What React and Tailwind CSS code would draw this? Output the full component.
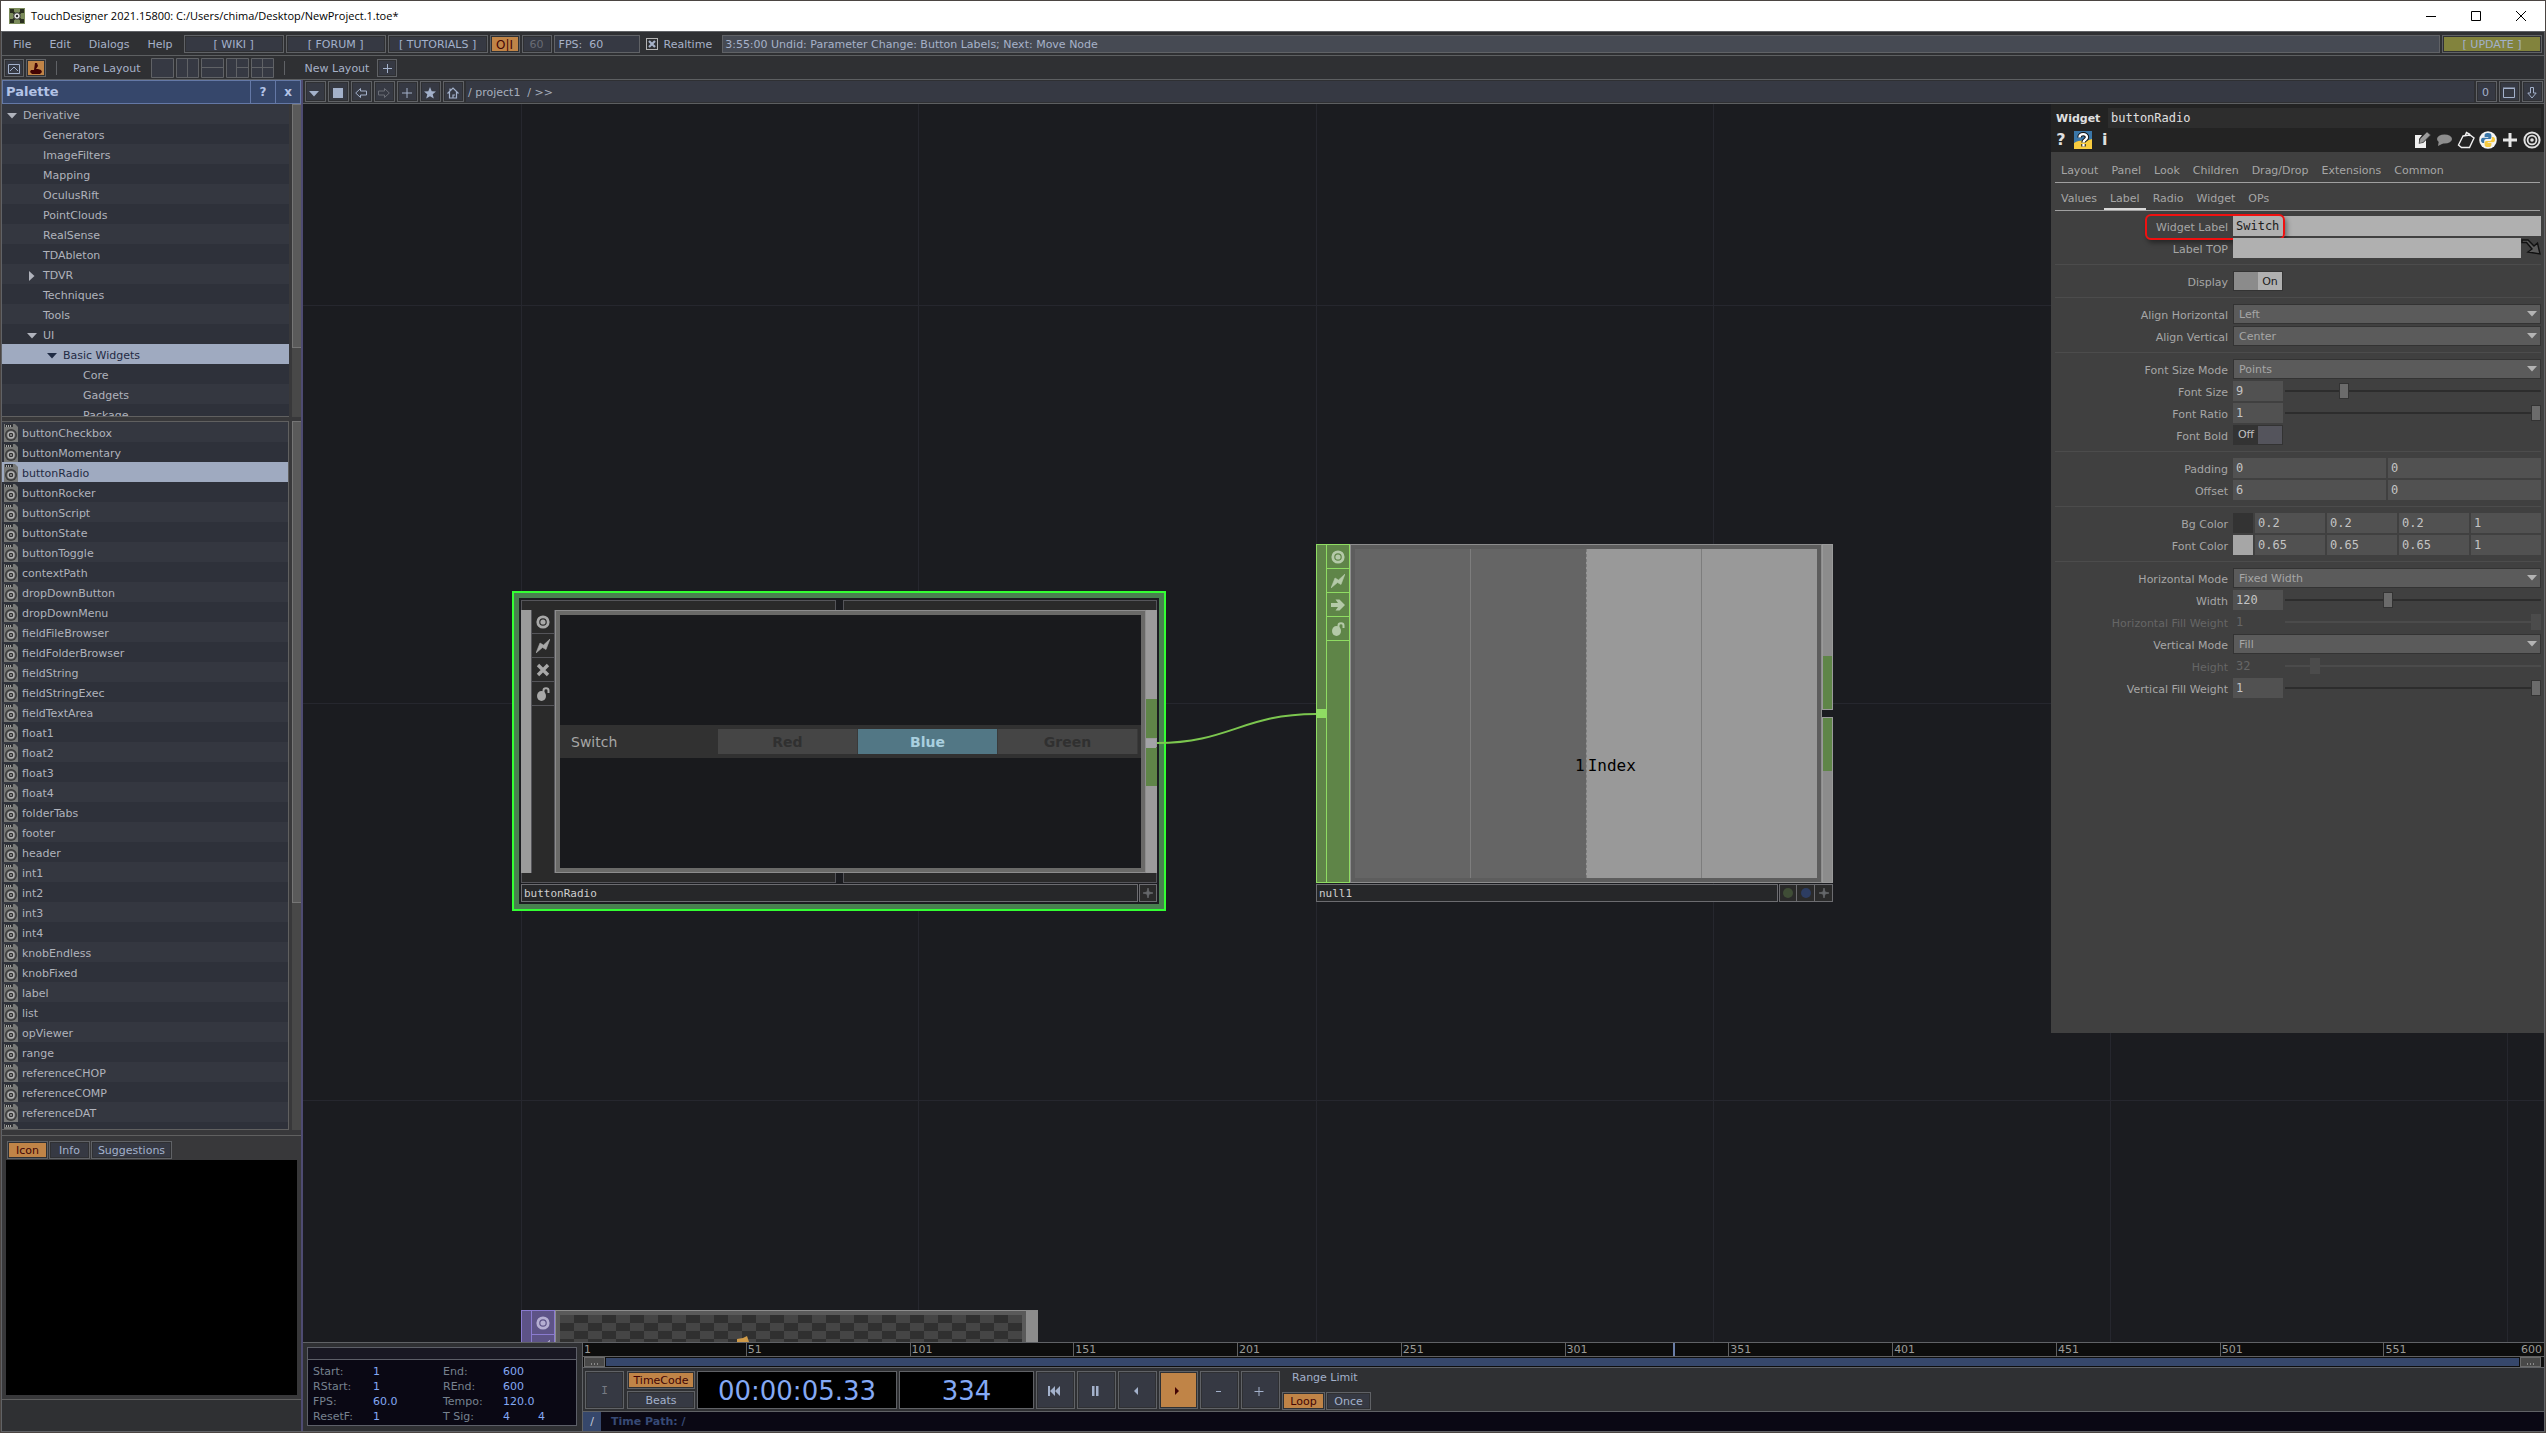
import { useState } from 'react'
import clsx from 'clsx'

const TREE = [
  { label: 'Derivative', depth: 0, arrow: 'down' },
  { label: 'Generators', depth: 1 },
  { label: 'ImageFilters', depth: 1 },
  { label: 'Mapping', depth: 1 },
  { label: 'OculusRift', depth: 1 },
  { label: 'PointClouds', depth: 1 },
  { label: 'RealSense', depth: 1 },
  { label: 'TDAbleton', depth: 1 },
  { label: 'TDVR', depth: 1, arrow: 'right' },
  { label: 'Techniques', depth: 1 },
  { label: 'Tools', depth: 1 },
  { label: 'UI', depth: 1, arrow: 'down' },
  { label: 'Basic Widgets', depth: 2, arrow: 'down' },
  { label: 'Core', depth: 3 },
  { label: 'Gadgets', depth: 3 },
  { label: 'Package', depth: 3 },
]

const TREE_INDENT = ['pl-[21px]', 'pl-[41px]', 'pl-[61px]', 'pl-[81px]']

const WIDGETS = [
  'buttonCheckbox', 'buttonMomentary', 'buttonRadio', 'buttonRocker', 'buttonScript', 'buttonState',
  'buttonToggle', 'contextPath', 'dropDownButton', 'dropDownMenu', 'fieldFileBrowser', 'fieldFolderBrowser',
  'fieldString', 'fieldStringExec', 'fieldTextArea', 'float1', 'float2', 'float3', 'float4', 'folderTabs',
  'footer', 'header', 'int1', 'int2', 'int3', 'int4', 'knobEndless', 'knobFixed', 'label', 'list', 'opViewer',
  'range', 'referenceCHOP', 'referenceCOMP', 'referenceDAT', 'referenceMAT',
]

const TICKS = [1, 51, 101, 151, 201, 251, 301, 351, 401, 451, 501, 551]
const LAST_FRAME = 600
const FRAME = 334

const ORANGE = 'bg-[#c08447] text-[#430404]'

/* ---------- shared bits ---------- */

function BoxButton({ className, on = false, children, ...rest }) {
  return (
    <button
      className={clsx(
        'flex shrink-0 items-center justify-center border border-[#606266] pt-0.5 outline-1 -outline-offset-2 outline-[#2f3033]',
        on ? ORANGE : 'bg-[#363943] text-[#a3b1cb]',
        className
      )}
      {...rest}
    >
      {children}
    </button>
  )
}

function Triangle({ dir = 'down', className }) {
  return (
    <svg viewBox="0 0 10 6" className={clsx('w-2.5 h-1.5', dir === 'right' && '-rotate-90', className)}>
      <path d="M0 0h10L5 5.5z" fill="currentColor" />
    </svg>
  )
}

function CompIcon() {
  return (
    <svg viewBox="0 0 14 18" className="-mt-0.5 w-3.5 h-[18px] shrink-0">
      <path d="M0 0h11l3 3v15H0z" fill="#777876" />
      <path d="M1 0h8v3H1z" fill="#303236" />
      <path d="M2 1h1v2H2zM4 1h1v2H4zM6 1h1v2H6z" fill="#aaa" />
      <circle cx="7" cy="11" r="6" fill="#3c3c3c" />
      <circle cx="7" cy="11" r="4.600" fill="#606060" />
      <circle cx="7" cy="11" r="3" fill="#303030" stroke="#b4b4b4" strokeWidth="1.4" />
      <circle cx="7" cy="11" r="1" fill="#999" />
    </svg>
  )
}

function Target({ className }) {
  return (
    <svg viewBox="0 0 18 18" className={className} fill="none" stroke="currentColor">
      <circle cx="9" cy="9" r="7.6" strokeWidth="2" />
      <circle cx="9" cy="9" r="4.4" strokeWidth="1.8" />
      <circle cx="9" cy="9" r="1.8" fill="currentColor" stroke="none" />
    </svg>
  )
}

function Python({ className }) {
  return (
    <svg viewBox="0 0 18 18" className={className}>
      <circle cx="9" cy="9" r="8.8" fill="#f4f4f4" />
      <path d="M9 2C6 2 5.6 3.2 5.6 4.6V6h3.7v.7H4C2.600 6.700 2 8 2 9.300s.7 2.600 1.900 2.600h1.300V10c0-1.200 1-2 2-2h3.500c1 0 1.700-.8 1.700-1.800V4.600C12.400 2.800 11.400 2 9 2z" fill="#3a76a8" />
      <path d="M9 16c3 0 3.400-1.200 3.400-2.600V12H8.700v-.7H14c1.400 0 2-1.300 2-2.600s-.7-2.600-1.900-2.600h-1.300V8c0 1.200-1 2-2 2H7.300c-1 0-1.700.8-1.700 1.800v1.600C5.600 15.200 6.600 16 9 16z" fill="#f7cb3f" />
    </svg>
  )
}

/* ---------- window top ---------- */

function TitleBar() {
  return (
    <header className="flex h-[30px] shrink-0 items-center bg-white pr-0.5 pl-2 text-black">
      <svg viewBox="0 0 16 16" className="size-4">
        <path d="M0 0h16v16H0z" fill="#7c8c5c" />
        <path d="M1 1h4v4H1zM11 1h4v4h-4zM1 11h4v4H1zM11 11h4v4h-4z" fill="#2b3020" />
        <path d="M3 3l10 10M13 3L3 13" stroke="#2b3020" strokeWidth="2" />
        <circle cx="8" cy="8" r="3.300" fill="#e8e8e8" stroke="#333" />
        <circle cx="8" cy="8" r="1.200" fill="#222" />
      </svg>
      <h1 className="ml-1.5 flex-1 font-['Open_Sans',sans-serif] text-[11px]">
        TouchDesigner 2021.15800: C:/Users/chima/Desktop/NewProject.1.toe*
      </h1>
      <button aria-label="Minimize" className="flex h-full w-[45px] items-center justify-center">
        <svg viewBox="0 0 10 10" className="size-2.5"><path d="M0 5.500h10" stroke="#000" /></svg>
      </button>
      <button aria-label="Maximize" className="flex h-full w-[45px] items-center justify-center">
        <svg viewBox="0 0 10 10" className="size-2.5"><path d="M.5.500h9v9h-9z" stroke="#000" fill="none" /></svg>
      </button>
      <button aria-label="Close" className="flex h-full w-[45px] items-center justify-center">
        <svg viewBox="0 0 10 10" className="size-2.5"><path d="M0 0l10 10M10 0L0 10" stroke="#000" /></svg>
      </button>
    </header>
  )
}

function MenuBar() {
  return (
    <nav className="flex h-6 shrink-0 items-center gap-0.5 border-b border-[#5d5f61] pr-0.5 pl-0.5 text-[#a7b2c9]">
      <div className="flex pt-0.5">
        {['File', 'Edit', 'Dialogs', 'Help'].map(m => (
          <button key={m} className="px-[9px]">{m}</button>
        ))}
      </div>
      {['[ WIKI ]', '[ FORUM ]', '[ TUTORIALS ]'].map(m => (
        <BoxButton key={m} className="h-[18px] w-[100px]">{m}</BoxButton>
      ))}
      <BoxButton on className="h-[18px] w-[30px] text-xs">O|I</BoxButton>
      <BoxButton className="h-[18px] w-[30px]"><span className="text-[#686b74]">60</span></BoxButton>
      <div className="flex h-[18px] w-[86px] items-center border border-[#606266] bg-[#363943] pt-0.5 pl-1 whitespace-pre">
        FPS:  60
      </div>
      <label className="ml-1 flex items-center gap-1.5">
        <span className="grid size-3 place-items-center border border-[#b5b5b5]">
          <input type="checkbox" defaultChecked className="peer col-start-1 row-start-1 size-2.5 appearance-none" />
          <svg viewBox="0 0 8 8" className="pointer-events-none invisible col-start-1 row-start-1 size-2 peer-checked:visible">
            <path d="M1 1l6 6M7 1L1 7" stroke="#a7b2c9" strokeWidth="2.200" />
          </svg>
        </span>
        <span className="pt-0.5">Realtime</span>
      </label>
      <output className="ml-2 flex h-[18px] flex-1 items-center border border-[#606266] bg-[#464a53] pt-0.5 pl-0.5">
        3:55:00 Undid: Parameter Change: Button Labels; Next: Move Node
      </output>
      <button className="h-[18px] w-[100px] border border-[#606266] bg-[#82833d] pt-0.5 leading-[14px] text-[#a3b1cb] outline-1 -outline-offset-2 outline-[#2f3033]">
        [ UPDATE ]
      </button>
    </nav>
  )
}

const PANE_LAYOUTS = [
  { name: 'Single', d: '' },
  { name: 'Left and right', d: 'M11.5 0v19' },
  { name: 'Top and bottom', d: 'M0 9.500h23' },
  { name: 'Split right', d: 'M10.500 0v19M10.500 9.500h12' },
  { name: 'Quad', d: 'M11.5 0v19M0 9.500h23' },
]

function ToolBar() {
  return (
    <div className="flex h-6 shrink-0 items-center gap-0.5 border-b border-[#5d5f61] pl-0.5 text-[#a7b2c9]">
      <BoxButton aria-label="Network" className="h-[18px] w-5">
        <svg viewBox="0 0 12 10" className="h-2.5 w-3" fill="none" stroke="currentColor">
          <path d="M.5.500h11v9H.5zM2 7l4-4 4 4" />
        </svg>
      </BoxButton>
      <BoxButton on aria-label="Palette" className="h-[18px] w-5">
        <svg viewBox="0 0 12 12" className="size-3" fill="currentColor">
          <path d="M5 0h2l1 3-2 3h2l3 1 1 2-2 2H2L0 9l1-2h3z" />
        </svg>
      </BoxButton>
      <span className="ml-2 h-3.5 w-px bg-[#606266]" />
      <span className="mr-2 ml-3.5 pt-0.5">Pane Layout</span>
      {PANE_LAYOUTS.map(p => (
        <button key={p.name} aria-label={p.name} className="h-5">
          <svg viewBox="0 0 23 20" className="h-5 w-[23px]" fill="#363943" stroke="#606266">
            <path d={`M.5.500h22v19H.5z${p.d}`} />
          </svg>
        </button>
      ))}
      <span className="ml-2 h-3.5 w-px bg-[#606266]" />
      <span className="mr-1.5 ml-[18px] pt-0.5">New Layout</span>
      <BoxButton aria-label="Add layout" className="h-[18px] w-5">
        <svg viewBox="0 0 9 9" className="size-[9px]"><path d="M4.500 0v9M0 4.500h9" stroke="currentColor" /></svg>
      </BoxButton>
    </div>
  )
}

/* ---------- palette ---------- */

function rowColor(i, selected) {
  if (selected) return 'bg-[#9faac0] text-[#1f2b44]'
  return i % 2 ? 'bg-[#2e313a] text-[#b0b3bc]' : 'bg-[#343740] text-[#b0b3bc]'
}

function ScrollBar({ thumb }) {
  return (
    <div className="w-[9px] shrink-0 bg-[#484848]">
      <div className="border border-r-0 border-[#757575] bg-[#5a5a5a]" style={{ height: `${thumb}%` }} />
    </div>
  )
}

function Palette() {
  const [folder, setFolder] = useState('Basic Widgets')
  const [item, setItem] = useState('buttonRadio')
  const [tab, setTab] = useState('Icon')

  return (
    <aside className="flex w-[299px] shrink-0 flex-col bg-[#38383a]">
      <div className="flex h-6 shrink-0 border border-[#6478a6] bg-[#36476b] text-[#b3c3e6]">
        <h2 className="flex-1 self-center pl-[3px] text-[13px] font-bold">Palette</h2>
        <button className="w-[25px] border-l border-[#6478a6] text-xs font-bold">?</button>
        <button className="w-[25px] border-l border-[#6478a6] text-xs font-bold">x</button>
      </div>

      <div className="flex h-[313px] shrink-0 justify-between">
        <ul className="w-[287px] overflow-hidden border-b border-[#606060]">
          {TREE.map((t, i) => (
            <li key={t.label}>
              <button
                onClick={() => setFolder(t.label)}
                className={clsx('flex h-5 w-full items-center pt-[3px]', TREE_INDENT[t.depth], rowColor(i, folder === t.label))}
              >
                {t.arrow && <Triangle dir={t.arrow} className="mr-1.5 -ml-4" />}
                {t.label}
              </button>
            </li>
          ))}
        </ul>
        <ScrollBar thumb={78} />
      </div>

      <div className="mt-1 flex min-h-0 flex-1 justify-between">
        <ul className="w-[287px] overflow-hidden border-y border-r border-[#606060]">
          {WIDGETS.map((w, i) => (
            <li key={w}>
              <button
                onClick={() => setItem(w)}
                className={clsx('flex h-5 w-full items-center gap-1 pt-[3px] pl-0.5', rowColor(i, item === w))}
              >
                <CompIcon />
                {w}
              </button>
            </li>
          ))}
        </ul>
        <ScrollBar thumb={68} />
      </div>

      <div className="mt-[5px] flex h-[296px] shrink-0 flex-col border-t border-[#606060] pt-[5px]">
        <div className="flex gap-px pl-[5px]">
          {['Icon', 'Info', 'Suggestions'].map(t => (
            <BoxButton
              key={t}
              on={tab === t}
              onClick={() => setTab(t)}
              className={clsx('h-[18px]', t === 'Suggestions' ? 'w-[81px]' : 'w-[41px]')}
            >
              {t}
            </BoxButton>
          ))}
        </div>
        <div className="mx-1 mt-px flex-1 bg-black" />
        <div className="mt-1 h-8 border-t border-[#606060] bg-[#2f3033]" />
      </div>
    </aside>
  )
}

/* ---------- network pane ---------- */

function PaneBar() {
  const icons = [
    ['Pane type', <Triangle className="mt-0.5 mr-0.5" />],
    ['Stop', <span className="size-2.5 bg-current" />],
    ['Back', <svg viewBox="0 0 12 12" className="size-3" fill="none" stroke="currentColor"><path d="M.7 6L5.500 1.500v2.500h6v4h-6v2.500z" /></svg>],
    ['Forward', <svg viewBox="0 0 12 12" className="size-3" fill="none" stroke="#6b6e76"><path d="M11.300 6L6.500 1.500v2.500h-6v4h6v2.500z" /></svg>],
    ['Add', <svg viewBox="0 0 10 10" className="size-2.5" stroke="currentColor"><path d="M5 0v10M0 5h10" /></svg>],
    ['Bookmark', <svg viewBox="0 0 12 12" className="size-3" fill="currentColor"><path d="M6 0l1.700 4.200 4.300.2-3.300 2.800 1.100 4.300L6 9.200l-3.800 2.300 1.100-4.300L0 4.400l4.300-.2z" /></svg>],
    ['Home', <svg viewBox="0 0 12 12" className="size-3" fill="none" stroke="currentColor" strokeWidth="1.200"><path d="M.5 6.500L6 1l5.500 5.500M2.500 5v6h7V5M6 11V8h2M3 4V1.500" /></svg>],
  ]
  return (
    <div className="flex h-6 shrink-0 items-center gap-0.5 border-b border-[#5d5f61] bg-[#2f3033] pr-px pl-0.5 text-[#a3b1cb]">
      {icons.map(([name, icon]) => (
        <BoxButton key={name} aria-label={name} className="size-[21px] pr-0.5">{icon}</BoxButton>
      ))}
      <div className="flex h-[21px] flex-1 items-center bg-[#363943] pt-0.5 pl-0.5 whitespace-pre text-[#a7aebd]">
        {'/ project1  / >>'}
      </div>
      <BoxButton className="size-[21px] pr-0.5">0</BoxButton>
      <BoxButton aria-label="Maximize pane" className="size-[21px] pr-0.5">
        <svg viewBox="0 0 12 11" className="h-[11px] w-3" fill="none" stroke="currentColor"><path d="M.5 1.500h11v9H.5zM0 1h12" /></svg>
      </BoxButton>
      <BoxButton aria-label="Pull down" className="size-[21px] pr-0.5">
        <svg viewBox="0 0 10 12" className="h-3 w-2.5" fill="none" stroke="currentColor"><path d="M3.500.500h3V6h2.700L5 11 .8 6h2.700z" /></svg>
      </BoxButton>
    </div>
  )
}

const FLAG_ICONS = {
  viewer: (
    <g fill="none" stroke="currentColor">
      <circle cx="7" cy="7" r="5.200" strokeWidth="2.800" />
      <circle cx="7" cy="7" r="2.600" fill="currentColor" stroke="none" />
    </g>
  ),
  bolt: <path d="M0 14L4 4l3.500 2L14 0 10 10.500l-3.500-2z" fill="currentColor" stroke="currentColor" strokeWidth=".6" />,
  cross: <path d="M2 2l10 10M12 2L2 12" stroke="currentColor" strokeWidth="3.400" />,
  arrow: <path d="M0 5h7L4.500 1.500h4L14 7l-5.500 5.500h-4L7 9H0z" fill="currentColor" />,
  lock: (
    <g>
      <ellipse cx="5.500" cy="9" rx="4.500" ry="5" fill="currentColor" />
      <path d="M7.500 6V3.500c0-3 5-3 5 0V6" fill="none" stroke="currentColor" strokeWidth="2" />
    </g>
  ),
}

function Flags({ icons, className, cell }) {
  return (
    <div className={clsx('flex w-6 shrink-0 flex-col border-x', className)}>
      {icons.map(name => (
        <button key={name} aria-label={name} className={clsx('flex h-6 shrink-0 items-center justify-center border-b', cell)}>
          <svg viewBox="0 0 14 14" className="size-3.5">{FLAG_ICONS[name]}</svg>
        </button>
      ))}
    </div>
  )
}

function NodePlus() {
  return (
    <svg viewBox="0 0 10 10" className="size-2.5">
      <path d="M5 0l1 4 4 1-4 1-1 4-1-4-4-1 4-1z" fill="#66686b" stroke="#66686b" strokeWidth=".8" />
    </svg>
  )
}

function NodeName({ children }) {
  return (
    <div className="flex flex-1 items-center border border-[#6c6c70] bg-[#262729] pt-0.5 pl-0.5 font-['DejaVu_Sans_Mono',monospace] text-[#cfcfcf]">
      {children}
    </div>
  )
}

function Bars({ side }) {
  const edge = side === 'top' ? 'border-t' : 'border-b'
  return (
    <div className="flex h-2.5 shrink-0 gap-[7px]">
      <div className={clsx('flex-1 border-x border-[#55555a] bg-[#2a2a2a]', edge)} />
      <div className={clsx('flex-1 border-x border-[#55555a] bg-[#2a2a2a]', edge)} />
    </div>
  )
}

function ButtonRadioNode() {
  const [choice, setChoice] = useState('Blue')
  return (
    <section className="absolute top-[487px] left-[209px] flex h-80 w-[654px] border-2 border-[#33ff33] bg-[#498050] p-[5px]">
      <div className="flex flex-1 flex-col bg-[#1b1c20] p-0.5">
        <Bars side="top" />
        <div className="flex min-h-0 flex-1">
          <div className="w-2.5 shrink-0 bg-[#9b9b9b]" />
          <Flags
            icons={['viewer', 'bolt', 'cross', 'lock']}
            className="border-[#55555a] bg-[#2a2a2a] text-[#a8a8a8]"
            cell="border-[#55555a]"
          />
          <div className="flex flex-1 flex-col justify-center border-5 border-[#6a6a68] bg-[#191a1d] outline-1 -outline-offset-1 outline-[#8d8d8d]">
            <div className="flex h-[33px] items-center bg-[#313131] pr-[3px] text-sm">
              <span className="flex-1 pl-[11px] text-[#a6a6a6]">Switch</span>
              {['Red', 'Blue', 'Green'].map(c => (
                <button
                  key={c}
                  onClick={() => setChoice(c)}
                  className={clsx(
                    'h-[25px] w-[140px] border-r border-[#3a3a3a] font-bold',
                    choice === c ? 'bg-[#527785] text-[#a9cfdf]' : 'bg-[#454545] text-[#303030]'
                  )}
                >
                  {c}
                </button>
              ))}
            </div>
          </div>
          <div className="flex w-[11px] shrink-0 flex-col justify-center gap-[9px] bg-[#9b9b9b] pt-0.5">
            <div className="h-[39px] bg-[#5f8548]" />
            <div className="h-[39px] bg-[#5f8548]" />
          </div>
        </div>
        <Bars side="bottom" />
        <div className="mt-px flex h-[18px] shrink-0 gap-px">
          <NodeName>buttonRadio</NodeName>
          <button aria-label="Activate viewer" className="flex w-[18px] items-center justify-center border border-[#6c6c70] bg-[#2a2a2a]">
            <NodePlus />
          </button>
        </div>
      </div>
    </section>
  )
}

function NullNode() {
  return (
    <section className="absolute top-[440px] left-[1013px] flex w-[517px] flex-col">
      <div className="flex h-[339px]">
        <div className="flex w-2.5 shrink-0 items-center border border-r-0 border-[#8fdc63] bg-[#5f8548]">
          <span className="h-[9px] w-full bg-[#8fdc63]" />
        </div>
        <Flags
          icons={['viewer', 'bolt', 'arrow', 'lock']}
          className="border-y border-[#8fdc63] bg-[#5f8548] text-[#b4c9a8]"
          cell="border-[#8fdc63]"
        />
        <div className="relative flex flex-1 border-5 border-[#5d5d5d] outline-1 -outline-offset-1 outline-[#8d8d8d]">
          <div className="flex-1 border-r border-[#7d7d7d] bg-[#656565]" />
          <div className="flex-1 bg-[#656565]" />
          <div className="flex-1 border-r border-l border-dashed border-[#7d7d7d] bg-[#999] [border-right-style:solid]" />
          <div className="flex-1 bg-[#999]" />
          <p className="absolute bottom-25 left-[220px] flex gap-[3px] font-['DejaVu_Sans_Mono',monospace] text-base text-black">
            <span>1</span>
            <span>Index</span>
          </p>
        </div>
        <div className="flex w-[11px] shrink-0 flex-col gap-[7px]">
          <div className="flex flex-1 flex-col justify-end border border-[#9a9a9a] bg-[#8c8c8c]">
            <div className="h-[53px] bg-[#5f8548]" />
          </div>
          <div className="flex-1 border border-[#9a9a9a] bg-[#8c8c8c]">
            <div className="h-[53px] bg-[#5f8548]" />
          </div>
        </div>
      </div>
      <div className="mt-px flex h-[18px]">
        <NodeName>null1</NodeName>
        <button aria-label="Display flag" className="ml-px flex w-[18px] items-center justify-center border border-[#6c6c70] bg-[#2a2a2a]">
          <span className="size-2.5 rounded-full bg-[#3f4d36]" />
        </button>
        <button aria-label="Render flag" className="flex w-[18px] items-center justify-center border border-l-0 border-[#6c6c70] bg-[#2a2a2a]">
          <span className="size-2.5 rounded-full bg-[#2d3d62]" />
        </button>
        <button aria-label="Activate viewer" className="flex w-[18px] items-center justify-center border border-l-0 border-[#6c6c70] bg-[#2a2a2a]">
          <NodePlus />
        </button>
      </div>
    </section>
  )
}

function TopNode() {
  return (
    <section className="absolute top-[1206px] left-[218px] flex h-80 w-[517px]">
      <div className="w-2.5 border border-r-0 border-[#8a7bd0] bg-[#5d5387]" />
      <Flags icons={['viewer', 'bolt']} className="border-t border-[#8a7bd0] bg-[#5d5387] text-[#b5aed2]" cell="border-[#8a7bd0]" />
      <div className="flex flex-1 border-5 border-[#5a5a5a] outline-1 -outline-offset-1 outline-[#8d8d8d]">
        <svg className="size-full bg-[#303030]">
          <defs>
            <pattern id="checker" width="28" height="16" patternUnits="userSpaceOnUse">
              <path d="M0 0h14v8H0zM14 8h14v8H14z" fill="#454545" />
            </pattern>
          </defs>
          <rect width="100%" height="100%" fill="url(#checker)" />
          <path d="M177 27v-3l6-1 4-2 2 6z" fill="#cf9a48" />
        </svg>
      </div>
      <div className="w-[11px] bg-[#8c8c8c]" />
    </section>
  )
}

function NetworkEditor() {
  return (
    <main className="relative min-h-0 flex-1 overflow-hidden bg-[#1b1c20]">
      <svg className="absolute inset-0 size-full" stroke="#26272e" fill="none" aria-hidden="true">
        {[218, 615, 1013, 1410, 1807, 2204].map(x => (
          <line key={x} x1={x + 0.5} x2={x + 0.5} y1="0" y2="100%" />
        ))}
        {[201, 599, 996].map(y => (
          <line key={y} x1="0" x2="100%" y1={y + 0.5} y2={y + 0.5} />
        ))}
      </svg>
      <ButtonRadioNode />
      <NullNode />
      <TopNode />
      <svg className="pointer-events-none absolute inset-0 size-full" fill="none" aria-hidden="true">
        <path d="M854 639C926 639 940 610 1013 610" stroke="#7cc64f" strokeWidth="2" />
        <path d="M843 635h10v9h-10z" fill="#a3a3a7" />
      </svg>
      <ParameterPanel />
    </main>
  )
}

/* ---------- parameters ---------- */

const PAGES_TOP = ['Layout', 'Panel', 'Look', 'Children', 'Drag/Drop', 'Extensions', 'Common']
const PAGES_BOTTOM = ['Values', 'Label', 'Radio', 'Widget', 'OPs']

const PARAM_GROUPS = [
  [
    { label: 'Widget Label', type: 'text', value: 'Switch' },
    { label: 'Label TOP', type: 'op', value: '' },
  ],
  [{ label: 'Display', type: 'toggle', value: true }],
  [
    { label: 'Align Horizontal', type: 'menu', value: 'Left' },
    { label: 'Align Vertical', type: 'menu', value: 'Center' },
  ],
  [
    { label: 'Font Size Mode', type: 'menu', value: 'Points' },
    { label: 'Font Size', type: 'slider', value: '9', pos: 22 },
    { label: 'Font Ratio', type: 'slider', value: '1', pos: 100 },
    { label: 'Font Bold', type: 'toggle', value: false },
  ],
  [
    { label: 'Padding', type: 'fields', value: ['0', '0'] },
    { label: 'Offset', type: 'fields', value: ['6', '0'] },
  ],
  [
    { label: 'Bg Color', type: 'color', swatch: 'bg-[#333333]', value: ['0.2', '0.2', '0.2', '1'] },
    { label: 'Font Color', type: 'color', swatch: 'bg-[#a6a6a6]', value: ['0.65', '0.65', '0.65', '1'] },
  ],
  [
    { label: 'Horizontal Mode', type: 'menu', value: 'Fixed Width' },
    { label: 'Width', type: 'slider', value: '120', pos: 40 },
    { label: 'Horizontal Fill Weight', type: 'slider', value: '1', pos: 100, disabled: true },
    { label: 'Vertical Mode', type: 'menu', value: 'Fill' },
    { label: 'Height', type: 'slider', value: '32', pos: 10, disabled: true },
    { label: 'Vertical Fill Weight', type: 'slider', value: '1', pos: 100 },
  ],
]

const FIELD = "h-5 min-w-0 px-[3px] font-['DejaVu_Sans_Mono',monospace] text-xs outline-none"

function Control({ param, id }) {
  const { type, value, label, disabled } = param

  if (type === 'text' || type === 'op') {
    return (
      <>
        <input id={id} defaultValue={value} className={clsx(FIELD, 'flex-1 bg-[#b0b0b0] text-[#1c1c1c]')} />
        {type === 'op' && (
          <button aria-label="Pick operator" className="size-5">
            <svg viewBox="0 0 20 20" className="size-5" fill="#5a5a5a" stroke="#111" strokeWidth="1.400">
              <path d="M1 4.500V2h6l6 6 3.500-3 2.500 11-12-2 4-3-5.500-6.500z" />
            </svg>
          </button>
        )}
      </>
    )
  }

  if (type === 'toggle') {
    return (
      <span className="flex h-5 w-[50px] items-center border border-[#333] bg-[#333]">
        {value ? (
          <>
            <input id={id} type="checkbox" defaultChecked className="h-full flex-1 appearance-none bg-[#8b8b8b]" />
            <span className="flex h-full w-6 items-center justify-center bg-[#b0b0b0] pt-0.5 text-[#1c1c1c]">On</span>
          </>
        ) : (
          <>
            <span className="w-6 text-center text-[#c0c0c0]">Off</span>
            <input id={id} type="checkbox" className="h-full flex-1 appearance-none bg-[#54545c]" />
          </>
        )}
      </span>
    )
  }

  if (type === 'menu') {
    return (
      <span className="relative flex flex-1">
        <select id={id} className="h-5 w-full appearance-none border border-[#333] bg-[#5b5b5b] px-[5px] pt-0.5 text-[#a6a6a6]">
          <option>{value}</option>
        </select>
        <Triangle className="pointer-events-none absolute top-[7px] right-1 text-[#b4b4b4]" />
      </span>
    )
  }

  if (type === 'slider') {
    return (
      <>
        <input
          id={id}
          defaultValue={value}
          disabled={disabled}
          className={clsx(FIELD, 'w-[50px]', disabled ? 'text-[#666]' : 'bg-[#515151] text-[#c4c4c4]')}
        />
        <input
          type="range"
          aria-label={`${label} slider`}
          defaultValue={param.pos}
          disabled={disabled}
          className={clsx(
            'ml-0.5 h-5 min-w-0 flex-1 appearance-none bg-transparent',
            '[&::-webkit-slider-runnable-track]:h-0.5 [&::-webkit-slider-thumb]:-mt-[7px] [&::-webkit-slider-thumb]:h-4',
            '[&::-webkit-slider-thumb]:w-2.5 [&::-webkit-slider-thumb]:appearance-none [&::-webkit-slider-thumb]:border',
            disabled
              ? '[&::-webkit-slider-runnable-track]:bg-[#4b4b4b] [&::-webkit-slider-thumb]:border-[#4b4b4b] [&::-webkit-slider-thumb]:bg-[#4b4b4b]'
              : '[&::-webkit-slider-runnable-track]:bg-[#2d2d2d] [&::-webkit-slider-thumb]:border-[#333] [&::-webkit-slider-thumb]:bg-[#6b6b6b]'
          )}
        />
      </>
    )
  }

  // plain number fields, with a swatch in front for colours
  return (
    <span className="flex min-w-0 flex-1 gap-0.5">
      {type === 'color' && <button aria-label={`${label} swatch`} className={clsx('size-5 shrink-0', param.swatch)} />}
      {value.map((v, i) => (
        <input
          key={i}
          id={i === 0 ? id : undefined}
          aria-label={i === 0 ? undefined : `${label} ${i + 1}`}
          defaultValue={v}
          className={clsx(FIELD, 'w-0 flex-1 bg-[#515151] text-[#c4c4c4]')}
        />
      ))}
    </span>
  )
}

function PageTabs({ pages, current, onSelect }) {
  return (
    <div className="flex h-7 items-end gap-px border-b border-[#a0a0a0]">
      {pages.map(p => (
        <button
          key={p}
          onClick={() => onSelect(p)}
          className={clsx('h-[22px] px-1.5', current === p && 'shadow-[inset_0_-2px_#d8d8d8]')}
        >
          {p}
        </button>
      ))}
    </div>
  )
}

function ParameterPanel() {
  const [page, setPage] = useState('Label')
  return (
    <section className="absolute top-0 right-0 flex h-3/4 w-[493px] flex-col bg-[#404040] text-[#a6a6a6]">
      <div className="flex h-12 shrink-0 flex-col bg-[#232323] pt-1 pr-[3px] pl-[5px] text-[#e0e0e0]">
        <div className="flex h-5 items-center">
          <label htmlFor="op-name" className="w-[52px] pt-0.5 text-[11px] font-bold">Widget</label>
          <input id="op-name" defaultValue="buttonRadio" className={clsx(FIELD, 'flex-1 bg-[#2d2d2d] text-[#e0e0e0]')} />
        </div>
        <div className="flex h-6 items-center">
          <button className="w-2.5 text-base font-bold">?</button>
          <button aria-label="Python help" className="ml-2 size-[18px]">
            <svg viewBox="0 0 18 18" className="size-[18px]">
              <path d="M0 0h18v9L0 12z" fill="#3a76a8" />
              <path d="M0 12c6-4 12-1 18-4v10H0z" fill="#f7cb3f" />
              <path d="M5.500 6.500C5.500 2 13 2 13 6.300 13 9 9.500 8.600 9.500 11.500M9.500 13v2.500" fill="none" stroke="#111" strokeWidth="4.400" />
              <path d="M5.500 6.500C5.500 2 13 2 13 6.300 13 9 9.500 8.600 9.500 11.500M9.500 13v2.500" fill="none" stroke="#fff" strokeWidth="2.400" />
            </svg>
          </button>
          <button className="ml-2.5 text-base font-bold">i</button>
          <div className="ml-auto flex gap-1">
            <button aria-label="Edit comment">
              <svg viewBox="0 0 18 18" className="size-[18px]">
                <path d="M2 4h7L6 8v4h4l3-3v8H2z" fill="#f0f0f0" />
                <path d="M6 12.500l1-4.500 7-7 3.500 3-7.500 7.500z" fill="#9a9a9a" stroke="#444" strokeWidth=".6" />
              </svg>
            </button>
            <button aria-label="Comment">
              <svg viewBox="0 0 18 18" className="size-[18px]" fill="#8d8d8d">
                <ellipse cx="9.500" cy="8" rx="7.500" ry="4.500" />
                <path d="M4 9l-1 6 6-3z" />
              </svg>
            </button>
            <button aria-label="Copy parameters">
              <svg viewBox="0 0 18 18" className="size-[18px]" fill="none" stroke="#f0f0f0" strokeWidth="1.400">
                <path d="M6 5L1.500 14l3 2.500h8L17 7l-4-3zM8 5l1.500-3.500 3 1.500-.5 2" />
              </svg>
            </button>
            <button aria-label="Python mode"><Python className="size-[18px]" /></button>
            <button aria-label="Add parameter">
              <svg viewBox="0 0 18 18" className="size-[18px]" stroke="#e6e6e6" strokeWidth="3"><path d="M9 2v14M2 9h14" /></svg>
            </button>
            <button aria-label="View"><Target className="size-[18px]" /></button>
          </div>
        </div>
      </div>

      <div className="px-1 pt-[3px]">
        <PageTabs pages={PAGES_TOP} current={page} onSelect={setPage} />
        <PageTabs pages={PAGES_BOTTOM} current={page} onSelect={setPage} />
      </div>

      <div className="flex flex-col gap-[13px] pt-[5px] pr-[3px] pl-1">
        {PARAM_GROUPS.map((group, g) => (
          <div key={g} className="relative flex flex-col gap-0.5">
            {g > 0 && <hr className="absolute inset-x-0 -top-[7px] border-[#4c4c4c]" />}
            {group.map(param => {
              const id = 'par-' + param.label.toLowerCase().replaceAll(' ', '-')
              return (
                <div key={param.label} className="relative flex h-5 items-center">
                  <label htmlFor={id} className={clsx('mr-[5px] w-[173px] pt-[3px] text-right', param.disabled && 'text-[#666]')}>
                    {param.label}
                  </label>
                  <Control param={param} id={id} />
                  {param.label === 'Widget Label' && (
                    <div className="pointer-events-none absolute -top-0.5 left-[90px] h-[26px] w-[140px] rounded-md border-2 border-[#f01010] shadow-[2px_3px_5px_rgba(0,0,0,0.4)]" />
                  )}
                </div>
              )
            })}
          </div>
        ))}
      </div>
    </section>
  )
}

/* ---------- timeline ---------- */

const TIME_INFO = [
  ['Start:', '1', 'End:', '600', ''],
  ['RStart:', '1', 'REnd:', '600', ''],
  ['FPS:', '60.0', 'Tempo:', '120.0', ''],
  ['ResetF:', '1', 'T Sig:', '4', '4'],
]

const TRANSPORT = [
  { name: 'Rewind', icon: <path d="M0 0h2v10H0zM7 0v10L2 5zM12 0v10L7 5z" /> },
  { name: 'Pause', icon: <path d="M3 0h2.500v10H3zM7 0h2.500v10H7z" /> },
  { name: 'Play reverse', icon: <path d="M8 1v8L4 5z" /> },
  { name: 'Play', icon: <path d="M4 1v8l4-4z" /> },
  { name: 'Step back', icon: <path d="M4 5h5v1H4z" /> },
  { name: 'Step forward', icon: <path d="M1.500 5h9v1h-9zM5.500 1h1v9h-1z" /> },
]

function RangeHandle() {
  return (
    <span className="flex h-2.5 w-[21px] items-end justify-center gap-0.5 border border-[#6b6b6b] bg-[#484848] pb-px">
      <i className="h-0.5 w-px bg-[#8a8a8a]" />
      <i className="h-0.5 w-px bg-[#8a8a8a]" />
      <i className="h-0.5 w-px bg-[#8a8a8a]" />
    </span>
  )
}

function Timeline() {
  const [mode, setMode] = useState('TimeCode')
  const [range, setRange] = useState('Loop')
  return (
    <footer className="flex shrink-0 border-t border-[#606266] bg-[#2f3033]">
      <div className="flex w-[279px] shrink-0 p-1 pr-[5px] pb-[5px]">
        <div className="flex-1 border border-[#5d5f68] bg-[#0a0814]">
          <div className="h-3 border-b border-[#5d5f68] bg-[#191823]" />
          <dl className="grid grid-cols-[60px_70px_60px_35px_1fr] pt-1 pl-[5px] leading-[15px] text-[#84a9f5]">
            {TIME_INFO.map(([a, av, b, bv, extra]) => [
              <dt key={a} className="text-[#77828f]">{a}</dt>,
              <dd key={a + 'v'}>{av}</dd>,
              <dt key={b} className="text-[#77828f]">{b}</dt>,
              <dd key={b + 'v'}>{bv}</dd>,
              <dd key={b + 'x'}>{extra}</dd>,
            ])}
          </dl>
        </div>
      </div>

      <div className="flex min-w-0 flex-1 flex-col border-l border-[#606266]">
        <div className="relative flex h-3.5 border-b border-[#606060] bg-[#0d0d0d] leading-[13px] text-[#9a9a96]">
          {TICKS.map((t, i) => (
            <div
              key={t}
              className={clsx('flex w-0 justify-between pl-px', i > 0 && 'border-l border-[#606060]')}
              style={{ flexGrow: Math.min(50, LAST_FRAME - t) }}
            >
              <span>{t}</span>
              {t === 551 && <span className="pr-0.5">600</span>}
            </div>
          ))}
          <div
            className="absolute inset-y-0 w-0.5 bg-[#6a7ea8]"
            style={{ left: `${((FRAME - 1) / (LAST_FRAME - 1)) * 100}%` }}
          />
        </div>
        <div className="flex h-[11px] items-center gap-px border-b border-[#606266] bg-[#0d0d0d] pr-[3px] pl-px">
          <RangeHandle />
          <span className="h-2 flex-1 bg-[#36476b]" />
          <RangeHandle />
        </div>

        <div className="flex h-[43px] items-center gap-0.5 pl-0.5 text-[#a3b1cb]">
          <BoxButton className="h-[38px] w-[39px]"><span className="font-['DejaVu_Sans_Mono',monospace] text-[#777b84]">I</span></BoxButton>
          <div className="flex flex-col gap-0.5 pl-px">
            {['TimeCode', 'Beats'].map(m => (
              <BoxButton key={m} on={mode === m} onClick={() => setMode(m)} className="h-[18px] w-[68px]">{m}</BoxButton>
            ))}
          </div>
          <output className="flex h-[38px] w-[200px] items-center justify-center border border-[#606266] bg-black pt-0.5 text-[26px] leading-none text-[#84a9f5]">
            00:00:05.33
          </output>
          <output className="flex h-[38px] w-[135px] items-center justify-center border border-[#606266] bg-black pt-0.5 text-[26px] leading-none text-[#84a9f5]">
            334
          </output>
          {TRANSPORT.map(t => (
            <BoxButton key={t.name} aria-label={t.name} on={t.name === 'Play'} className="h-[38px] w-[39px] pr-1">
              <svg viewBox="0 0 12 10" className="h-2.5 w-3" fill="currentColor">{t.icon}</svg>
            </BoxButton>
          ))}
          <fieldset className="pt-0.5">
            <legend className="pl-2.5">Range Limit</legend>
            <div className="mt-1 flex gap-px">
              <BoxButton on={range === 'Loop'} onClick={() => setRange('Loop')} className="h-[18px] w-[43px]">Loop</BoxButton>
              <BoxButton on={range === 'Once'} onClick={() => setRange('Once')} className="h-[18px] w-[45px]">Once</BoxButton>
            </div>
          </fieldset>
        </div>

        <div className="flex h-5 items-center border-t border-[#606266] bg-[#0a0814] font-bold text-[#374a75]">
          <button className="h-full w-[18px] bg-[#36476b] font-normal text-[#c4cbdb]">/</button>
          <span className="pt-px pl-2.5">Time Path: /</span>
        </div>
      </div>
    </footer>
  )
}

export default function App() {
  return (
    <div className="flex h-screen min-h-[720px] flex-col overflow-hidden border border-[#4b4542] font-['DejaVu_Sans',Verdana,sans-serif] text-[11px] leading-4">
      <TitleBar />
      <div className="flex min-h-0 flex-1 flex-col border border-[#606266] bg-[#2f3033]">
        <MenuBar />
        <ToolBar />
        <div className="flex min-h-0 flex-1">
          <Palette />
          <div className="w-0.5 shrink-0 bg-[#4e4b72]" />
          <div className="flex min-w-0 flex-1 flex-col">
            <PaneBar />
            <NetworkEditor />
            <Timeline />
          </div>
        </div>
      </div>
    </div>
  )
}
